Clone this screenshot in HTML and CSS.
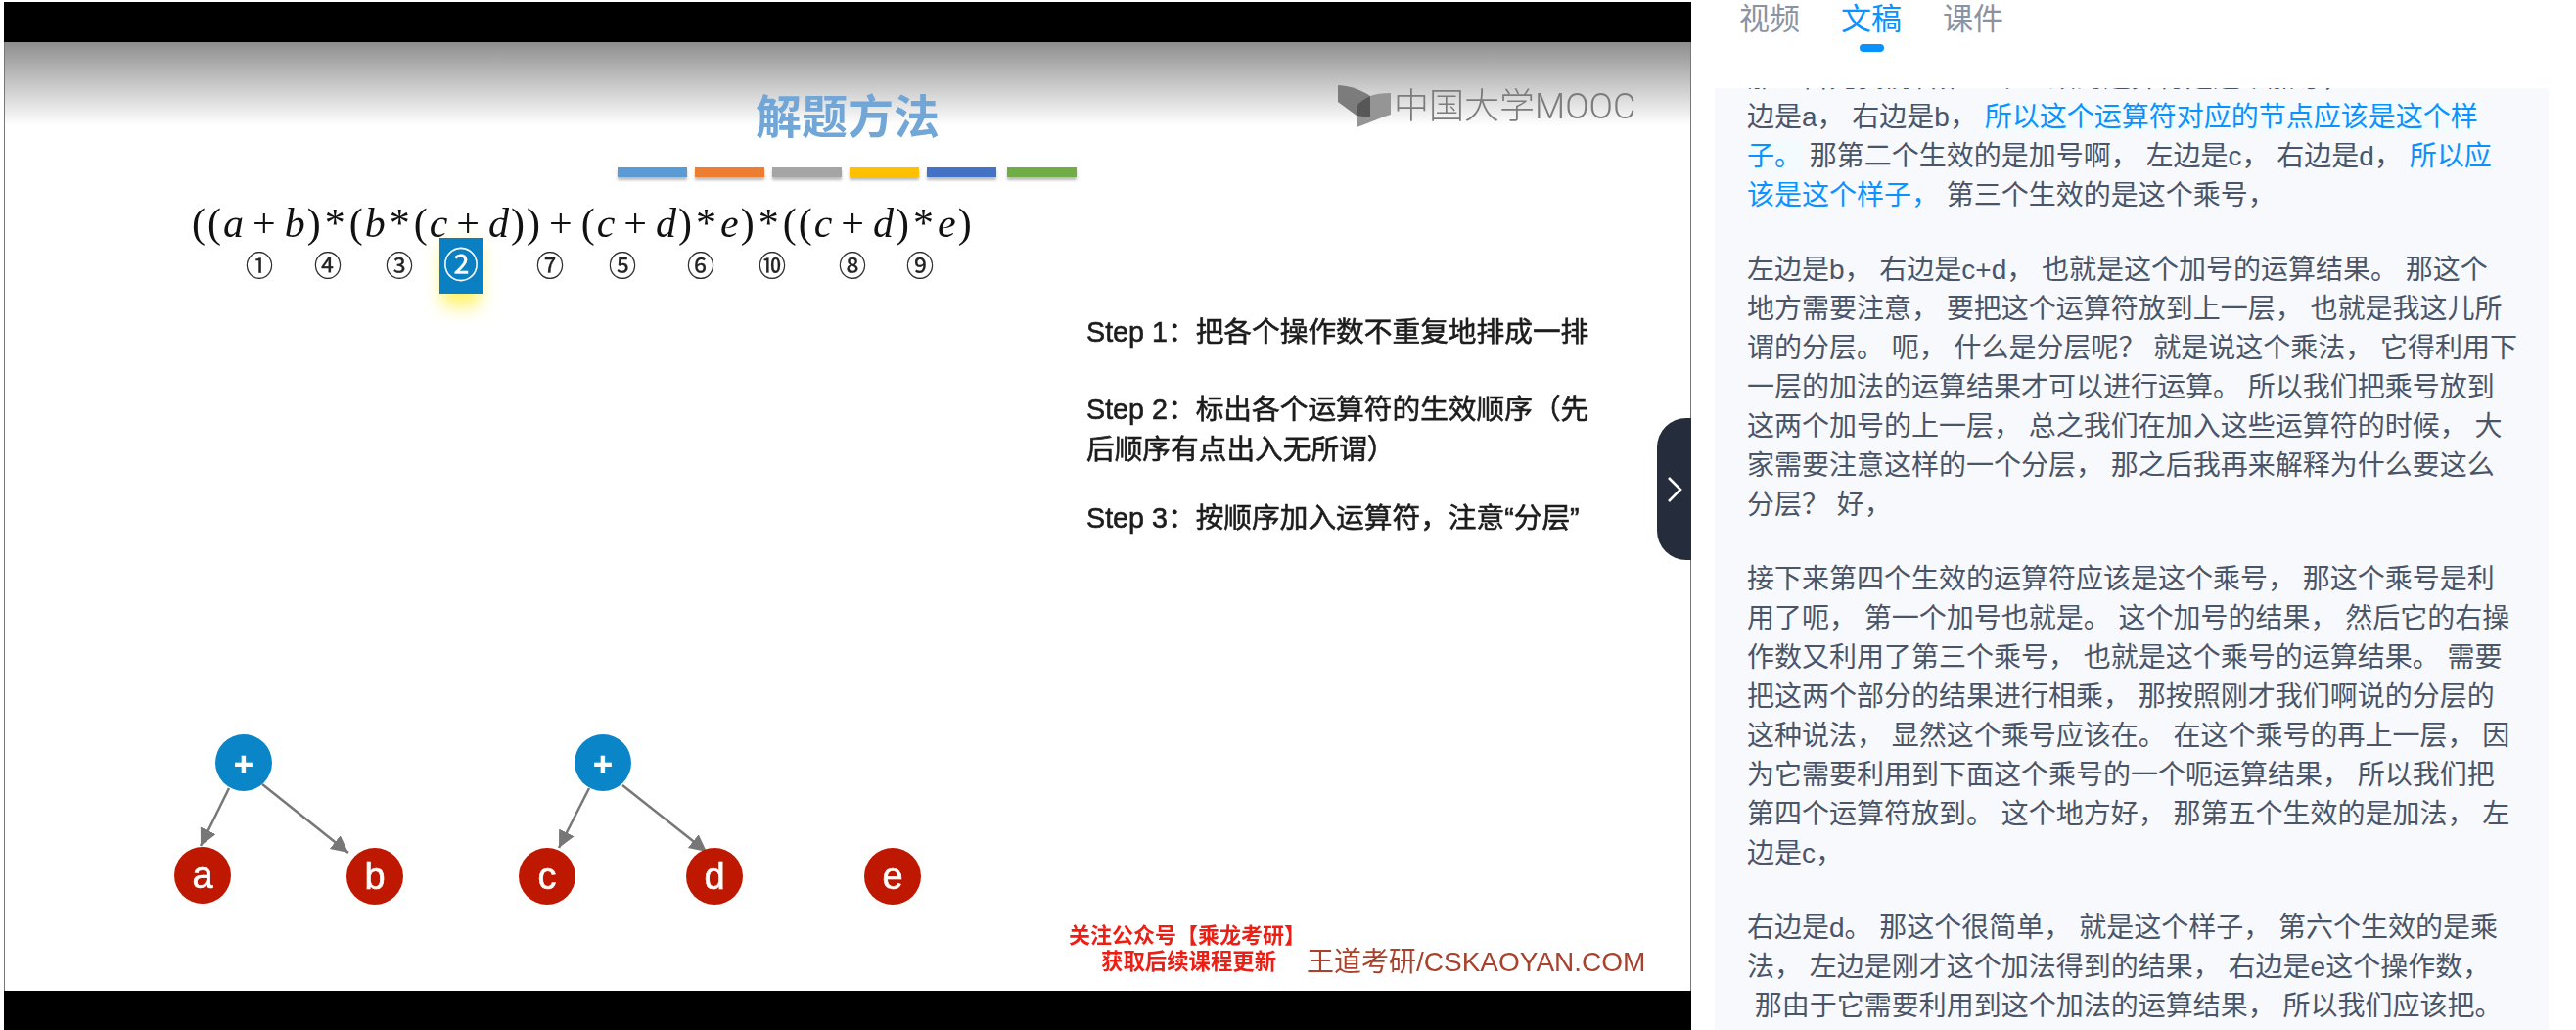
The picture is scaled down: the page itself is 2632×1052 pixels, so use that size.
FILE: index.html
```html
<!DOCTYPE html>
<html>
<head>
    <title>解题方法</title>
    <link rel="stylesheet" href="styles.css">
</head>
<body>
    <div class="player">
        <div class="black-bar bar-top"></div>
        <div class="slide">
            <h1 class="slide-title">解题方法</h1>
            <div class="color-bars">
                <span class="color-bar c1"></span>
                <span class="color-bar c2"></span>
                <span class="color-bar c3"></span>
                <span class="color-bar c4"></span>
                <span class="color-bar c5"></span>
                <span class="color-bar c6"></span>
            </div>
            <div class="formula">((<i>a</i><b>+</b><i>b</i>)<u>*</u>(<i>b</i><u>*</u>(<i>c</i><b>+</b><i>d</i>))<b>+</b>(<i>c</i><b>+</b><i>d</i>)<u>*</u><i>e</i>)<u>*</u>((<i>c</i><b>+</b><i>d</i>)<u>*</u><i>e</i>)</div>

            <!-- 运算符生效顺序 -->
            <svg class="order" width="1000" height="86" viewBox="5 232 1000 86">
                <defs>
                    <filter id="glow" x="-100%" y="-100%" width="300%" height="300%">
                        <feGaussianBlur stdDeviation="9"/>
                    </filter>
                </defs>
                <rect class="order-glow" x="452" y="250" width="38" height="62" filter="url(#glow)"/>
                <rect class="order-box" x="449" y="242" width="44" height="57"/>
                <text x="265" y="281">①</text>
                <text x="335" y="281">④</text>
                <text x="408" y="281">③</text>
                <text class="order-now" x="471" y="283">②</text>
                <text x="562" y="281">⑦</text>
                <text x="636" y="281">⑤</text>
                <text x="716" y="281">⑥</text>
                <text x="789" y="281">⑩</text>
                <text x="871" y="281">⑧</text>
                <text x="940" y="281">⑨</text>
            </svg>

            <div class="steps">
                <p class="step">Step 1：把各个操作数不重复地排成一排</p>
                <p class="step step-two">Step 2：标出各个运算符的生效顺序（先<br>后顺序有点出入无所谓）</p>
                <p class="step">Step 3：按顺序加入运算符，注意“分层”</p>
            </div>

            <svg class="tree" width="1000" height="190" viewBox="5 740 1000 190">
                <defs>
                    <marker id="arrow" markerWidth="8" markerHeight="8" refX="7" refY="3.5" orient="auto">
                        <path d="M0 0L7 3.5L0 7z" fill="#777"/>
                    </marker>
                </defs>
                <line x1="234" y1="803" x2="205" y2="862" marker-end="url(#arrow)"/>
                <line x1="268" y1="799" x2="356" y2="869" marker-end="url(#arrow)"/>
                <line x1="602" y1="803" x2="571" y2="864" marker-end="url(#arrow)"/>
                <line x1="636" y1="800" x2="722" y2="868" marker-end="url(#arrow)"/>
                <circle class="node-op" cx="249" cy="777" r="29"/>
                <circle class="node-op" cx="616" cy="777" r="29"/>
                <circle class="node-val" cx="207" cy="892" r="29"/>
                <circle class="node-val" cx="383" cy="893" r="29"/>
                <circle class="node-val" cx="559" cy="893" r="29"/>
                <circle class="node-val" cx="730" cy="893" r="29"/>
                <circle class="node-val" cx="912" cy="893" r="29"/>
                <text class="op-label" x="249" y="790">+</text>
                <text class="op-label" x="616" y="790">+</text>
                <text x="207" y="905">a</text>
                <text x="383" y="906">b</text>
                <text x="559" y="906">c</text>
                <text x="730" y="906">d</text>
                <text x="912" y="906">e</text>
            </svg>

            <div class="credit">
                <div class="credit-red">
                    <div class="red-first">关注公众号【乘龙考研】</div>
                    <div class="red-second">获取后续课程更新</div>
                </div>
                <div class="credit-brand">王道考研/CSKAOYAN.COM</div>
            </div>

            <div class="mooc-logo">
                <svg width="56" height="46" viewBox="0 0 56 46">
                    <path d="M1 1C15 2 25 6 34 12L34 34L20 32L1 18z" fill="#7c7c7c"/>
                    <path d="M55 9C46 9 39 10 34 12C28 15 23 18 20 22L20 44C32 40 44 34 55 31z" fill="#959595"/>
                    <path d="M34 12C28 15 23 18 20 22L20 32L34 34z" fill="#575757"/>
                </svg>
                <span class="mooc-text">中国大学MOOC</span>
            </div>
        </div>
        <div class="black-bar bar-bottom"></div>
        <div class="toggle">
            <svg width="18" height="30" viewBox="0 0 18 30">
                <path d="M3 3L15 15L3 27" fill="none" stroke="#fff" stroke-width="2.6"/>
            </svg>
        </div>
    </div>

    <div class="side">
        <div class="tabs">
            <span class="tab">视频</span>
            <span class="tab tab-active">文稿</span>
            <span class="tab">课件</span>
        </div>
        <div class="transcript">
            <div class="transcript-inner">
<p>那么首先我们看第一个生效的运算符是这个加号， 左
边是a， 右边是b， <span class="hl">所以这个运算符对应的节点应该是这个样
子。</span> 那第二个生效的是加号啊， 左边是c， 右边是d， <span class="blue">所以应
该是这个样子，</span> 第三个生效的是这个乘号，</p>
<p>左边是b， 右边是c+d， 也就是这个加号的运算结果。 那这个
地方需要注意， 要把这个运算符放到上一层， 也就是我这儿所
谓的分层。 呃， 什么是分层呢？ 就是说这个乘法， 它得利用下
一层的加法的运算结果才可以进行运算。 所以我们把乘号放到
这两个加号的上一层， 总之我们在加入这些运算符的时候， 大
家需要注意这样的一个分层， 那之后我再来解释为什么要这么
分层？ 好，</p>
<p>接下来第四个生效的运算符应该是这个乘号， 那这个乘号是利
用了呃， 第一个加号也就是。 这个加号的结果， 然后它的右操
作数又利用了第三个乘号， 也就是这个乘号的运算结果。 需要
把这两个部分的结果进行相乘， 那按照刚才我们啊说的分层的
这种说法， 显然这个乘号应该在。 在这个乘号的再上一层， 因
为它需要利用到下面这个乘号的一个呃运算结果， 所以我们把
第四个运算符放到。 这个地方好， 那第五个生效的是加法， 左
边是c，</p>
<p>右边是d。 那这个很简单， 就是这个样子， 第六个生效的是乘
法， 左边是刚才这个加法得到的结果， 右边是e这个操作数，
 那由于它需要利用到这个加法的运算结果， 所以我们应该把。</p>
            </div>
        </div>
    </div>
</body>
</html>
```

FILE: styles.css
```css
* {
    box-sizing: border-box;
}
body {
    margin: 0;
    height: 1052px;
    overflow: hidden;
    display: flex;
    background-color: #fff;
    font-family: "Liberation Sans", "Noto Sans CJK SC", sans-serif;
}

/* 左边的视频 */
.player {
    position: relative;
    width: 1724px;
    margin-left: 4px;
    padding-top: 2px;
    display: flex;
    flex-direction: column;
    flex-shrink: 0;
}
.black-bar {
    background-color: #000;
}
.bar-top {
    height: 41px;
}
.bar-bottom {
    height: 40px;
}
.slide {
    position: relative;
    height: 969px;
    display: flex;
    flex-direction: column;
    border-left: 1px solid #777;
    border-right: 1px solid #777;
    background: linear-gradient(#8e8e8e, #fff 85px);
    filter: blur(0.5px);
}
.slide-title {
    margin: 55px 0 0;
    height: 44px;
    line-height: 44px;
    font-size: 47px;
    font-weight: 700;
    text-align: center;
    color: #71a6d6;
}
.color-bars {
    display: flex;
    margin: 29px 0 0 626px;
}
.color-bar {
    width: 71px;
    height: 10px;
    margin-right: 8px;
    box-shadow: 0 3px 3px #bbb;
}
.c1 { background-color: #5b9bd5; }
.c2 { background-color: #ed7d31; }
.c3 { background-color: #a5a5a5; }
.c4 { background-color: #ffc000; }
.c5 { background-color: #4472c4; }
.c6 { background-color: #70ad47; margin-left: 3px; }

.formula {
    margin: 26px 0 0 191px;
    height: 42px;
    line-height: 42px;
    font-family: "Liberation Serif", serif;
    font-size: 42px;
    letter-spacing: 2px;
    color: #111;
    white-space: nowrap;
}
.formula b {
    font-weight: 400;
    margin: 0 7px;
}
.formula u {
    text-decoration: none;
    margin: 0 2px;
}
.order {
    display: block;
    position: relative;
    margin-top: -16px;
    overflow: visible;
    flex-shrink: 0;
}
.order text {
    font-family: "Noto Sans CJK SC", sans-serif;
    font-size: 28px;
    text-anchor: middle;
    fill: #222;
    stroke: #222;
    stroke-width: 0.3;
}
.order-glow {
    fill: #fff36a;
}
.order-box {
    fill: #0a7fc2;
}
.order .order-now {
    font-size: 36px;
    fill: #fff;
    stroke: #fff;
}

.steps {
    margin-left: 1105px;
    width: 530px;
    font-size: 28.7px;
    line-height: 41px;
    color: #1c1c1c;
    -webkit-text-stroke: 0.6px #1c1c1c;
}
.step {
    margin: 0 0 29px;
    white-space: nowrap;
}
.step-two {
    margin-top: 38px;
}
.tree {
    display: block;
    margin-top: 163px;
    flex-shrink: 0;
}
.tree line {
    stroke: #777;
    stroke-width: 2.5;
}
.node-op {
    fill: #0a85c8;
}
.node-val {
    fill: #bf1800;
}
.tree text {
    font-size: 38px;
    text-anchor: middle;
    fill: #fff;
    stroke: #fff;
    stroke-width: 0.6;
}
.tree .op-label {
    font-size: 34px;
    font-weight: 700;
}
.credit {
    display: flex;
    align-items: flex-end;
    margin: 10px 0 0 1087px;
}
.credit-red {
    width: 243px;
    color: #ee1e14;
    font-weight: 700;
    line-height: 27px;
    flex-shrink: 0;
    white-space: nowrap;
}
.red-first {
    font-size: 22px;
}
.red-second {
    font-size: 22.4px;
    padding-left: 33px;
}
.credit-brand {
    font-size: 28px;
    line-height: 27px;
    color: #a8422c;
    white-space: nowrap;
}
.mooc-logo {
    position: absolute;
    top: 43px;
    left: 1361px;
    display: flex;
    align-items: center;
    gap: 2px;
}
.mooc-text {
    margin-top: -8px;
    font-family: Roboto, "Noto Sans CJK SC", sans-serif;
    font-size: 36px;
    font-weight: 300;
    color: #7c7c7c;
    white-space: nowrap;
}
.toggle {
    position: absolute;
    top: 427px;
    right: 0;
    width: 35px;
    height: 145px;
    display: flex;
    align-items: center;
    justify-content: center;
    background-color: #252c3c;
    border-radius: 30px 0 0 30px;
}

/* 右边的文稿 */
.side {
    width: 876px;
    margin-left: 24px;
    flex-shrink: 0;
    display: flex;
    flex-direction: column;
    height: 1052px;
}
.tabs {
    height: 90px;
    padding: 1px 0 0 25px;
    display: flex;
    gap: 42px;
}
.tab {
    position: relative;
    height: 38px;
    font-size: 31px;
    line-height: 38px;
    color: #8a93a3;
}
.tab-active {
    color: #0a93ff;
}
.tab-active::after {
    content: "";
    position: absolute;
    left: 19px;
    top: 44px;
    width: 25px;
    height: 8px;
    border-radius: 4px;
    background-color: #0a93ff;
}
.transcript {
    flex: 1;
    overflow: hidden;
    width: 852px;
    background-color: #f8f9fd;
}
.transcript-inner {
    margin-top: -30px;
    padding-left: 33px;
    font-size: 28px;
    line-height: 40px;
    color: #4a5568;
}
.transcript-inner p {
    margin: 0 0 36px;
    white-space: pre;
}
.hl {
    color: #0a93ff;
    background-color: #f4fbff;
}
.blue {
    color: #0a93ff;
}
```
